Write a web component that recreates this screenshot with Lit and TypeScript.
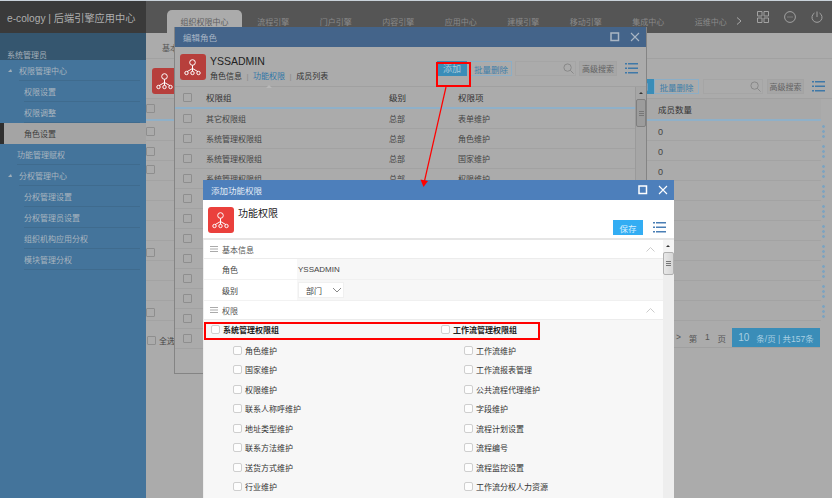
import { LitElement, html, css, svg } from "lit";
import { customElement } from "lit/decorators.js";

const nodeIcon = (cls: string) => html`<span class="logo ${cls}"><svg viewBox="0 0 26 26" width="26" height="26" fill="none" stroke="#fff" stroke-width="1">
  <circle cx="12.500" cy="8.500" r="2.800"/><path d="M12.500 11.300v6M12.500 14.500l-5.500 3.200M12.500 14.500l5.500 3.200"/><circle cx="6.500" cy="19" r="1.700"/><circle cx="12.500" cy="19" r="1.700"/><circle cx="18.500" cy="19" r="1.700"/></svg></span>`;
const listIcon = (c: string) => html`<svg class="list" viewBox="0 0 13 11" width="13" height="11" fill="${c}"><path d="M0 0h2v1.500H0zM3 0h10v1.500H3zM0 4.500h2V6H0zM3 4.500h10V6H3zM0 9h2v1.500H0zM3 9h10v1.500H3z"/></svg>`;
const lens = html`<svg class="lens" viewBox="0 0 12 12" width="11" height="11" fill="none" stroke="#858585" stroke-width="1"><circle cx="5" cy="5" r="4"/><path d="M8 8l3.500 3.500"/></svg>`;
const winBtns = html`<span class="winbtns"><svg viewBox="0 0 10 10" width="10" height="10" fill="none" stroke="currentColor"><rect x="1" y="1" width="7.500" height="7.500" stroke-width="1.500"/></svg><svg viewBox="0 0 10 10" width="10" height="10" fill="none" stroke="currentColor" stroke-width="1.100"><path d="M1 1l8 8M9 1l-8 8"/></svg></span>`;
const scroll = html`<div class="sb-cap"></div><div class="sb-thumb"><i></i></div>`;

const tabs = ["组织权限中心","流程引擎","门户引擎","内容引擎","应用中心","建模引擎","移动引擎","集成中心","运维中心"];
const sideItems: [string, number][] = [["权限管理中心",1],["权限设置",2],["权限调整",2],["角色设置",3],["功能管理赋权",0],["分权管理中心",1],["分权管理设置",2],["分权管理员设置",2],["组织机构应用分权",2],["模块管理分权",2]];
const editRows = [["其它权限组","总部","表单维护"],["系统管理权限组","总部","角色维护"],["系统管理权限组","总部","国家维护"],["系统管理权限组","总部","权限维护"],["","",""],["","",""],["","",""],["","",""],["","",""],["","",""],["","",""],["","",""]];
const left = ["角色维护","国家维护","权限维护","联系人称呼维护","地址类型维护","联系方法维护","送货方式维护","行业维护"];
const right = ["工作流维护","工作流报表管理","公共流程代理维护","字段维护","流程计划设置","流程编号","流程监控设置","工作流分权人力资源"];
const bgVals = ["0","0","0","","","","","","",""];

@customElement("app-root")
export class AppRoot extends LitElement {
  static styles = css`
    :host { display: block; width: 832px; height: 498px; overflow: hidden; position: relative; background: #ababab;
      font-family: "Liberation Sans", "Noto Sans CJK SC", sans-serif; font-size: 8px; color: #333; }
    * { box-sizing: border-box; }
    .page { display: grid; grid-template-columns: 146px 1fr; grid-template-rows: 33px 1fr; height: 498px; }
    .brand { background: #3a3a3a; color: #aeaeae; font-size: 10.200px; display: flex; align-items: center; padding: 0 0 0 7px; border-top: 1px solid #c9d2da; white-space: nowrap; }
    .top { background: #555; border-top: 1px solid #c9d2da; display: flex; align-items: flex-end; position: relative; padding-left: 21px; color: #8a8a8a; }
    .tab { width: 62.500px; height: 23px; display: flex; align-items: center; justify-content: center; white-space: nowrap; flex: none; }
    .tab.on { width: 75px; background: #ababab; border-radius: 5px 5px 0 0; color: #5e5e5e; }
    .chev { margin-left: -6px; margin-bottom: 8px; flex: none; }
    .tools { display: flex; gap: 15px; margin-left: 15px; margin-bottom: 10px; flex: none; }
    .side { background: #44749b; display: flex; flex-direction: column; color: #a8b4bf; }
    .user { height: 27px; background: #35566f; display: flex; align-items: flex-end; padding: 0 0 0 7px; color: #a4b0ba; }
    .si { height: 21px; display: flex; align-items: center; flex: none; position: relative; padding-right: 6px; }
    .si span { flex: 1; height: 100%; display: flex; align-items: center; border-bottom: 1px solid #3f6b8e; }
    .si.l1 { padding-left: 19px; } .si.l2 { padding-left: 24px; } .si.l0 { padding-left: 17px; }
    .si.l1::before { content: ""; position: absolute; left: 8px; top: 9px; border-left: 3px solid transparent; border-bottom: 3px solid #a0aeb9; border-right: 1px solid transparent; }
    .si.l3 { background: #a4a4a4; color: #3d3d3d; border-left: 4px solid #2f2f2f; padding-left: 20px; }
    .si.l3 span { border: 0; }
    .main { position: relative; display: flex; flex-direction: column; }
    .crumb { height: 26px; padding: 9px 0 0 16px; border-bottom: 1px solid #a1a1a1; color: #555; }
    .bar { height: 40px; display: flex; align-items: flex-end; justify-content: flex-end; padding: 0 7px 4px 6px; border-bottom: 1px solid #a1a1a1; gap: 4px; }
    .logo { display: flex; flex: none; width: 26px; height: 26px; border-radius: 3px; background: #b73f3c; }
    .logo.hot { background: #ea403c; }
    .bar .logo { margin-right: auto; }
    .blue-btn { display: flex; align-items: center; justify-content: center; background: #3a8db8; color: #a9c9da; height: 15px; width: 30px; flex: none; font-size: 9px; }
    .flush { margin-right: -4px; }
    .line-btn { display: flex; align-items: center; justify-content: center; color: #3d7ea9; border: 1px solid #8caec6; height: 15px; width: 42px; flex: none; font-size: 8.500px; }
    .bar .line-btn { width: 45px; }
    .search { flex: none; height: 15px; border: 1px solid #a5a5a5; display: flex; align-items: center; justify-content: flex-end; }
    .search .lens { margin-right: 1px; }
    .adv { flex: none; height: 15px; background: #a6a6a6; color: #636363; display: flex; align-items: center; justify-content: center; border: 1px solid #a3a3a3; width: 38px; }
    .bar .adv { width: 37px; }
    .list { flex: none; margin-left: 5px; }
    .bar .list { margin: 0 0 2px 4px; }
    .thead { height: 22px; display: flex; align-items: center; border-bottom: 2px solid #8fb0c8; padding-left: 512px; color: #333; font-size: 8.500px; margin-right: 11px; background: #a8a8a8; }
    .rw { display: flex; align-items: center; gap: 1px; padding-right: 7px; height: 20px; }
    .row { flex: 1; height: 100%; display: flex; align-items: center; padding: 2px 0 0 512px; border-bottom: 1px solid #a3a3a3; color: #444; font-size: 9px; }
    .dots { width: 3px; height: 14px; flex: none; background: radial-gradient(circle, #7da3bf 1.300px, transparent 1.500px) 0 0/3px 5px; }
    .bg-rows { flex: 1; position: relative; }
    .ck { width: 9px; height: 9px; flex: none; border: 1px solid #8e8e8e; border-radius: 1px; display: block; }
    .bg-ck { position: absolute; left: 0; }
    .all { position: absolute; left: 1px; top: 214px; display: flex; align-items: center; gap: 3px; color: #444; }
    .pager { position: absolute; right: 12px; top: 207px; width: 146px; height: 20px; display: flex; align-items: center; color: #555; border-bottom: 1px solid #a0a0a0; font-size: 8.500px; }
    .pager .p { flex: 1; display: flex; justify-content: space-between; padding: 0 6px 0 2px; }
    .pager .b { background: #3a8db8; color: #a9cfe2; width: 88px; height: 100%; display: flex; align-items: center; justify-content: center; gap: 7px; white-space: nowrap; }
    .pager .b b { font-weight: 400; font-size: 10px; }

    .win { position: absolute; display: flex; flex-direction: column; }
    .w1 { left: 174px; top: 27px; width: 473px; height: 347px; background: #ababab; border: 1px solid #848484; border-top: 0; }
    .w2 { left: 203px; top: 180px; width: 471px; height: 318px; background: #fff; }
    .tbar { height: 20px; flex: none; display: flex; align-items: center; justify-content: space-between; padding: 0 6px 0 8px; font-size: 8.500px; }
    .w1 .tbar { background: #44648a; color: #a9b6c5; }
    .w2 .tbar { background: #4d7fbb; color: #e4ecf5; }
    .winbtns { display: flex; gap: 10px; align-items: center; }
    .w1 .winbtns { color: #aab6c4; } .w2 .winbtns { color: #fff; }
    .w1-head { height: 40px; flex: none; display: flex; border-bottom: 1px solid #a0a0a0; padding: 7px 8px 0 5px; }
    .w1-title { margin-left: 4px; flex: 1; }
    .w1-title b { display: block; font-weight: 400; font-size: 10.500px; color: #222; line-height: 12px; margin-top: 1px; }
    .subtabs { display: flex; gap: 4.500px; margin-top: 5px; line-height: 10px; color: #333; white-space: nowrap; }
    .subtabs em { font-style: normal; color: #2f76a8; position: relative; }
    .subtabs em::after { content: ""; position: absolute; left: 13px; top: 13px; border: 3px solid transparent; border-bottom-color: #b8b8b8; border-top: 0; }
    .subtabs u { text-decoration: none; color: #8a8a8a; }
    .w1-tools { display: flex; gap: 3px; align-items: center; margin-top: 7px; height: 15px; }
    .w1-body { flex: 1; display: flex; min-height: 0; }
    .w1-table { flex: 1; min-width: 0; }
    .w1-th { height: 22px; display: flex; align-items: center; border-bottom: 2px solid #8fb0c8; font-size: 8.500px; color: #333; }
    .w1-tr { height: 20px; display: flex; align-items: center; border-bottom: 1px solid #a2a2a2; color: #444; }
    .c0 { width: 31px; flex: none; padding-left: 8px; } .c1 { width: 183px; flex: none; } .c2 { width: 69px; flex: none; }
    .w1-sb { width: 11px; flex: none; background: #a6a6a6; border-left: 1px solid #9a9a9a; }
    .sb-cap { height: 12px; position: relative; }
    .sb-cap::after { content: ""; position: absolute; left: 3px; top: 5px; border: 2px solid transparent; border-bottom: 2.500px solid #333; border-top: 0; }
    .sb-thumb { height: 23px; border: 1px solid #999; border-radius: 2px; display: flex; align-items: center; justify-content: center; }
    .w1 .sb-thumb { background: #9c9c9c; border-color: #7f7f7f; height: 28px; }
    .sb-thumb i { display: block; width: 5px; height: 5px; background: repeating-linear-gradient(#777 0 1px, transparent 1px 2px); }

    .w2-head { height: 40px; flex: none; display: flex; padding: 7px 8px 0 5px; border-bottom: 2px solid #e6e6e6; }
    .w2-head h1 { flex: 1; margin: 0 0 0 4px; font-size: 10px; font-weight: 400; color: #222; line-height: 13px; }
    .save { width: 30px; height: 15px; margin-top: 13px; background: #33adf3; color: #d8f0ff; display: flex; align-items: center; justify-content: center; font-size: 8.500px; }
    .w2-head .list { margin: 15px 0 0 10px; }
    .w2-body { flex: 1; display: flex; min-height: 0; }
    .form { flex: 1; min-width: 0; overflow: hidden; border-left: 1px solid #eee; }
    .sec { height: 19px; display: flex; align-items: center; padding: 0 8px 0 6px; border-bottom: 1px solid #ececec; color: #555; gap: 4px; background: #fff; }
    .sec .up { margin-left: auto; }
    .fr { height: 21px; display: flex; align-items: center; background: #f7f7f7; color: #444; }
    .fr .k { width: 93px; padding-left: 18px; height: 100%; display: flex; align-items: center; background: #fff; flex: none; border-bottom: 1px solid #f2f2f2; }
    .fr .v { flex: 1; height: 100%; display: flex; align-items: center; padding-left: 1px; border-bottom: 1px solid #f0f0f0; }
    .sel { width: 46px; height: 16px; background: #fff; border: 1px solid #f0f0f0; display: flex; align-items: center; justify-content: space-between; padding: 0 1px 0 7px; }
    .groups { background: #f7f7f7; padding-top: 1px; height: 200px; }
    .ghead { display: grid; grid-template-columns: 230px 1fr; height: 17px; align-items: center; font-weight: 700; color: #222; }
    .col { display: flex; gap: 3px; align-items: center; }
    .w2 .ck { border-color: #cfcfcf; background: #fdfdfd; border-radius: 2px; }
    .ghead .col { padding-left: 7px; }
    .items { display: grid; grid-template-columns: 231px 1fr; grid-auto-rows: 19.500px; padding-top: 2.500px; }
    .items .col { padding-left: 29px; }
    .w2-sb { width: 11px; flex: none; background: #eee; }
    .w2-sb .sb-cap { background: #f4f4f4; }
    .w2-sb .sb-thumb { background: linear-gradient(90deg,#e8e8e8,#d6d6d6); border-color: #b0b0b0; }
    .mark { position: absolute; border: 2px solid #f00; pointer-events: none; }
    .m1 { left: 436px; top: 62px; width: 35px; height: 25px; }
    .m2 { left: 204px; top: 322px; width: 336px; height: 18px; }
    .arrow { position: absolute; left: 0; top: 0; pointer-events: none; }
  `;

  render() {
    return html`<div class="page">
      <div class="brand">e-cology | 后端引擎应用中心</div>
      <div class="top">
        ${tabs.map((t, i) => html`<div class="tab ${i === 0 ? "on" : ""}">${t}</div>`)}
        <svg class="chev" viewBox="0 0 6 8" width="6" height="8" fill="none" stroke="#a9a9a9" stroke-width="1"><path d="M1 .5l4 3.500-4 3.500"/></svg>
        <div class="tools">
          <svg viewBox="0 0 12 12" width="12" height="12" fill="none" stroke="#a2a2a2"><path d="M.5.5h4.500v4.500H.5zM7 .5h4.500v4.500H7zM.5 7h4.500v4.500H.5zM7 7h4.500v4.500H7z"/></svg>
          <svg viewBox="0 0 12 12" width="12" height="12" fill="none" stroke="#a2a2a2"><circle cx="6" cy="6" r="5.400"/><path d="M3.500 6h1M5.500 6h1M7.500 6h1"/></svg>
          <svg viewBox="0 0 12 12" width="12" height="12" fill="none" stroke="#a2a2a2"><path d="M3.500 2a5 5 0 1 0 5 0M6 .5v5.500"/></svg>
        </div>
      </div>
      <div class="side">
        <div class="user">系统管理员</div>
        ${sideItems.map(([t, l]) => html`<div class="si l${l}"><span>${t}</span></div>`)}
      </div>
      <div class="main">
        <div class="crumb">基本</div>
        <div class="bar">
          ${nodeIcon("")}
          <div class="blue-btn flush">添加</div>
          <div class="line-btn">批量删除</div>
          <div class="search" style="width:60px">${lens}</div>
          <div class="adv">高级搜索</div>
          ${listIcon("#3e78a8")}
        </div>
        <div class="thead">成员数量</div>
        <div class="bg-rows">
          ${bgVals.map((v) => html`<div class="rw"><div class="row">${v}</div><i class="dots"></i></div>`)}
          ${[-17, 6, 26, 44, 127, 187].map((y) => html`<span class="ck bg-ck" style="top:${y}px"></span>`)}
          <div class="all"><span class="ck"></span>全选</div>
          <div class="pager"><div class="p"><span>&gt;</span><span>第</span><span>1</span><span>页</span></div><div class="b"><b>10</b><span>条/页 | 共157条</span></div></div>
        </div>
      </div>
    </div>

    <div class="win w1">
      <div class="tbar"><span>编辑角色</span>${winBtns}</div>
      <div class="w1-head">
        ${nodeIcon("")}
        <div class="w1-title"><b>YSSADMIN</b>
          <div class="subtabs"><span>角色信息</span><u>|</u><em>功能权限</em><u>|</u><span>成员列表</span></div>
        </div>
        <div class="w1-tools">
          <div class="blue-btn">添加</div><div class="line-btn">批量删除</div>
          <div class="search" style="width:61px">${lens}</div>
          <div class="adv">高级搜索</div>${listIcon("#3e78a8")}
        </div>
      </div>
      <div class="w1-body">
        <div class="w1-table">
          <div class="w1-th"><div class="c0"><span class="ck"></span></div><div class="c1">权限组</div><div class="c2">级别</div><div>权限项</div></div>
          ${editRows.map((r) => html`<div class="w1-tr"><div class="c0"><span class="ck"></span></div><div class="c1">${r[0]}</div><div class="c2">${r[1]}</div><div>${r[2]}</div></div>`)}
        </div>
        <div class="w1-sb">${scroll}</div>
      </div>
    </div>

    <div class="win w2">
      <div class="tbar"><span>添加功能权限</span>${winBtns}</div>
      <div class="w2-head">
        ${nodeIcon("hot")}
        <h1>功能权限</h1>
        <div class="save">保存</div>${listIcon("#4a7fb5")}
      </div>
      <div class="w2-body">
        <div class="form">
          ${this.sec("基本信息")}
          <div class="fr"><div class="k">角色</div><div class="v">YSSADMIN</div></div>
          <div class="fr"><div class="k">级别</div><div class="v"><div class="sel">部门<svg viewBox="0 0 10 6" width="10" height="6" fill="none" stroke="#888"><path d="M1 1l4 4 4-4"/></svg></div></div></div>
          ${this.sec("权限")}
          <div class="groups">
            <div class="ghead"><div class="col"><span class="ck"></span>系统管理权限组</div><div class="col"><span class="ck"></span>工作流管理权限组</div></div>
            <div class="items">${left.map((t, i) => html`<div class="col"><span class="ck"></span>${t}</div><div class="col"><span class="ck"></span>${right[i]}</div>`)}</div>
          </div>
        </div>
        <div class="w2-sb">${scroll}</div>
      </div>
    </div>

    <div class="mark m1"></div><div class="mark m2"></div>
    <svg class="arrow" width="832" height="498" fill="none">
      ${svg`<path d="M446 87L424.500 181" stroke="#f00" stroke-width="1.200"/><path d="M420.500 179.500l7.500 1.500-4.500 6z" fill="#f00"/>`}
    </svg>`;
  }

  sec(t: string) {
    return html`<div class="sec"><svg viewBox="0 0 8 6" width="8" height="6" stroke="#aaa" stroke-width="1"><path d="M0 .5h8M0 3h8M0 5.500h8"/></svg>${t}<svg class="up" viewBox="0 0 9 5" width="9" height="5" fill="none" stroke="#ccc"><path d="M.5 4.500l4-4 4 4"/></svg></div>`;
  }
}
